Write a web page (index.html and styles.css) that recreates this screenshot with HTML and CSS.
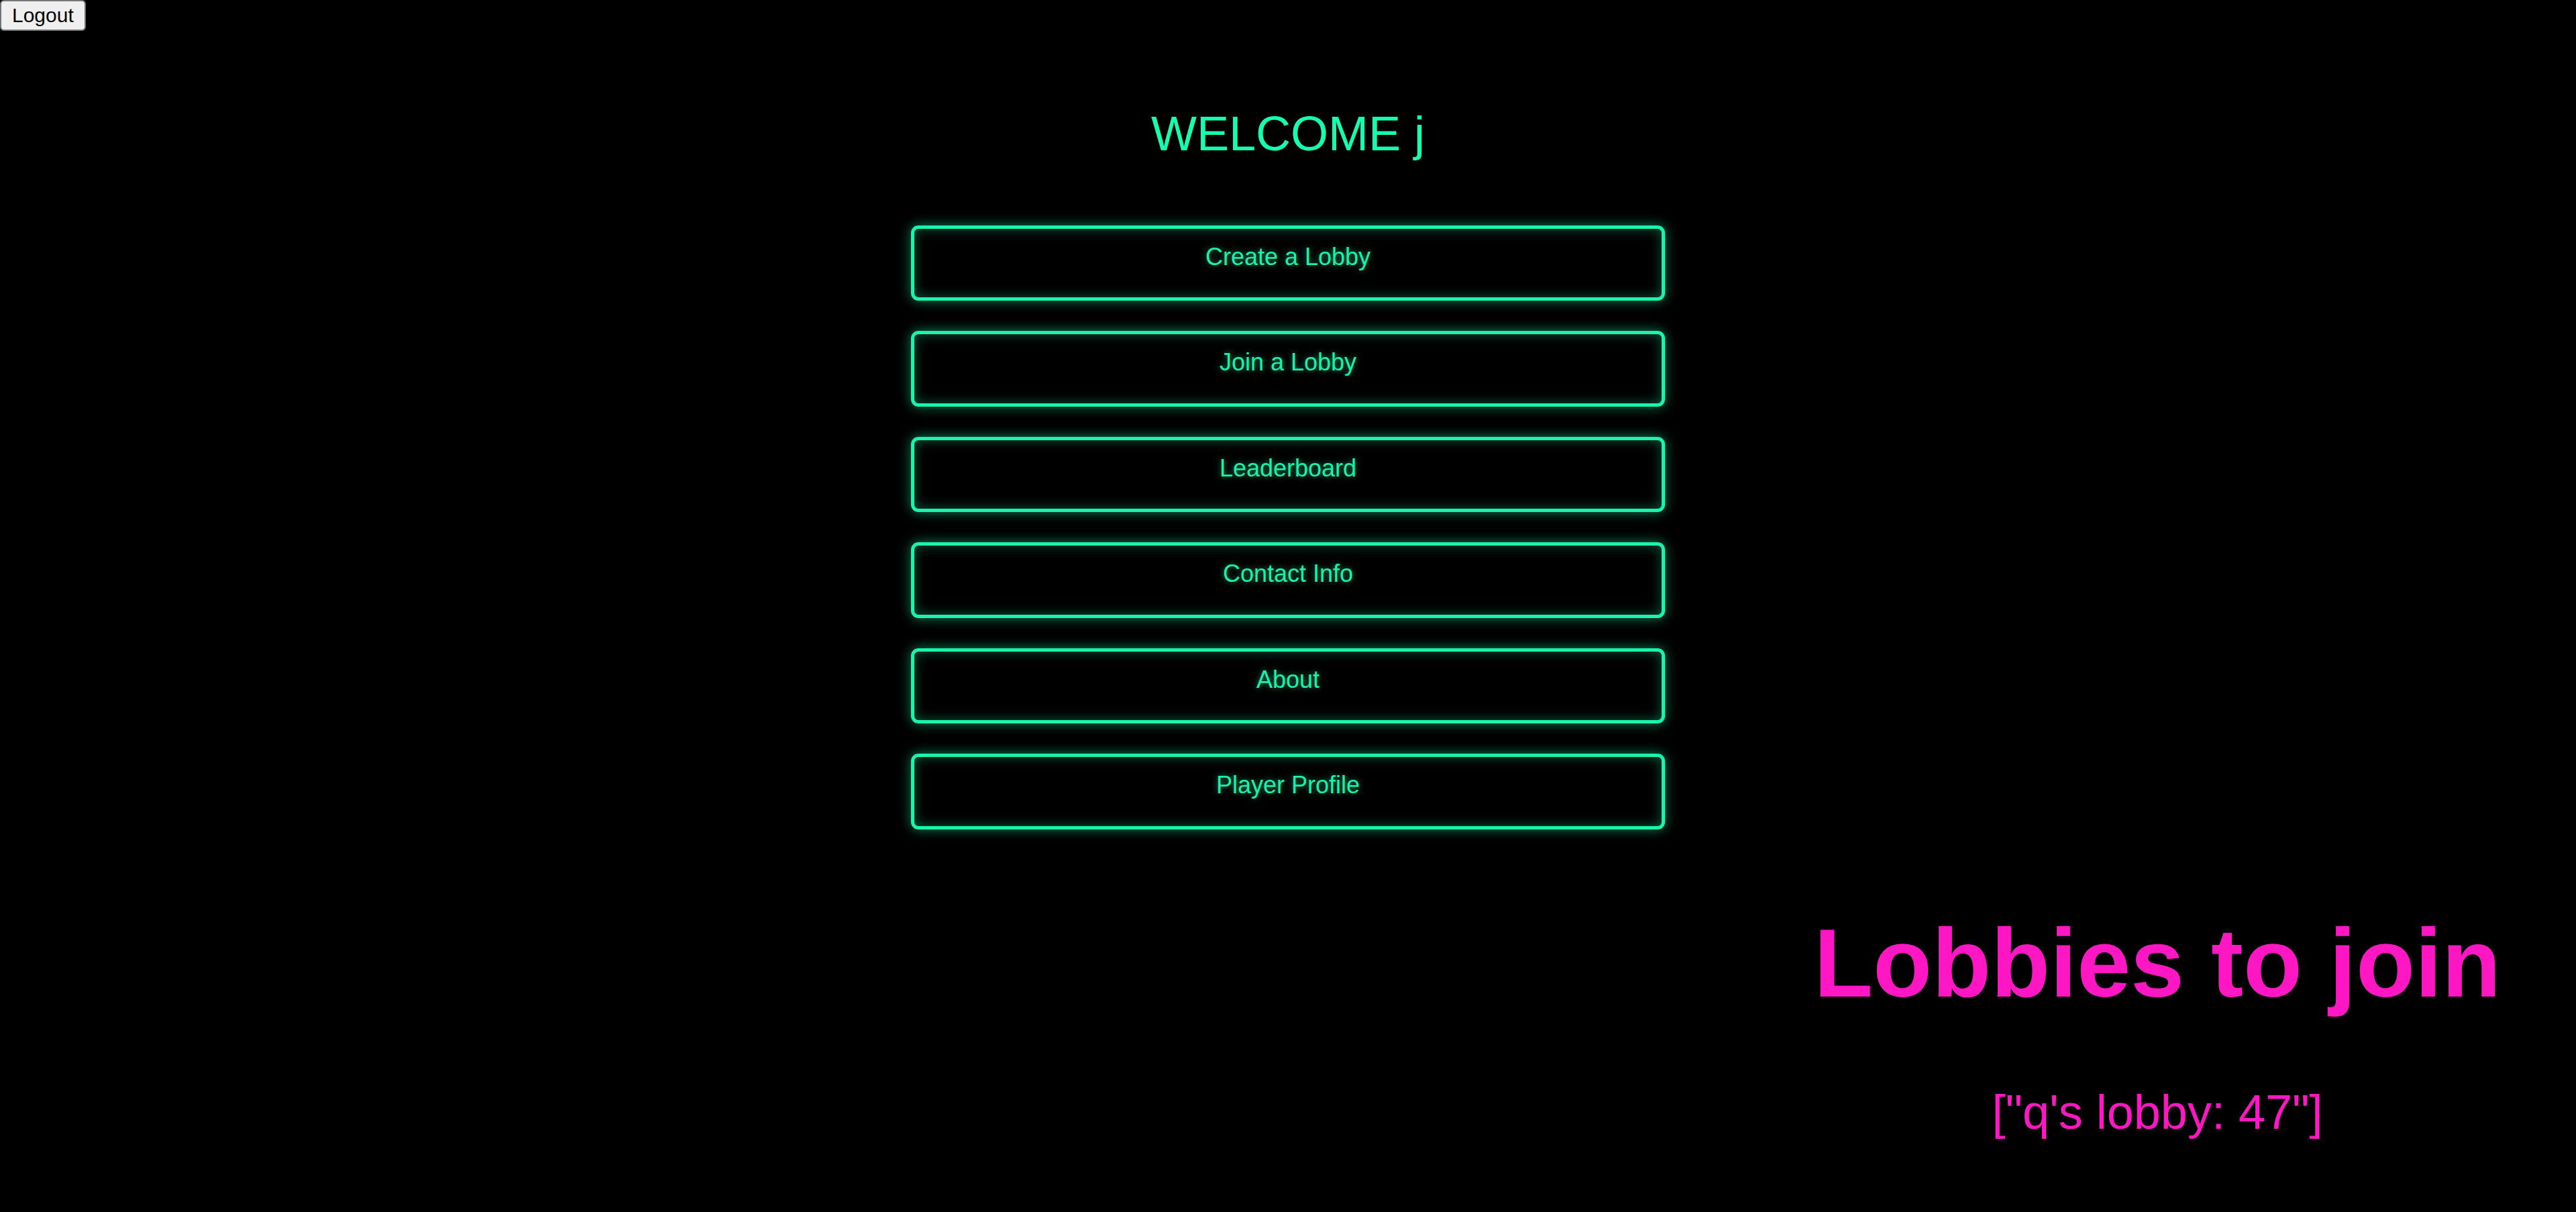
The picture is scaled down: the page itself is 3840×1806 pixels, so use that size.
FILE: index.html
```html
<!DOCTYPE html>
<html lang="en">
<head>
<meta charset="utf-8">
<title>Menu</title>
<link rel="stylesheet" href="styles.css">
</head>
<body>
  <header class="topbar">
    <button class="logout" type="button">Logout</button>
  </header>
  <h1 class="welcome">WELCOME j</h1>
  <nav class="menu">
    <a class="menu-btn" href="#">Create a Lobby</a>
    <a class="menu-btn" href="#">Join a Lobby</a>
    <a class="menu-btn" href="#">Leaderboard</a>
    <a class="menu-btn" href="#">Contact Info</a>
    <a class="menu-btn" href="#">About</a>
    <a class="menu-btn" href="#">Player Profile</a>
  </nav>
  <section class="lobbies">
    <h1 class="lobbies-title">Lobbies to join</h1>
    <p class="lobbies-list">["q's lobby: 47"]</p>
  </section>
</body>
</html>
```
FILE: styles.css
```css
html, body {
  margin: 0;
  padding: 0;
  background: #000;
}

body {
  font-family: "Liberation Sans", Arial, sans-serif;
  color: #15ffb3;
  min-height: 1806px;
}

.topbar {
  display: flex;
}

.logout {
  font-family: "Liberation Sans", Arial, sans-serif;
  font-size: 30px;
  line-height: 34.5px;
  color: #000;
  background: #efefef;
  border: 2px solid #767676;
  border-radius: 6px;
  padding: 3.5px 16px;
  margin: 0;
  cursor: pointer;
}

.welcome {
  margin: 112px 0 0;
  font-size: 72px;
  line-height: 83px;
  font-weight: normal;
  text-align: center;
  color: #15ffb3;
}

.menu {
  margin-top: 95px;
  display: flex;
  flex-direction: column;
  align-items: center;
  gap: 45px;
}

.menu-btn {
  box-sizing: border-box;
  display: block;
  width: 1124px;
  height: 112.5px;
  padding-top: 21px;
  border: 5px solid #19f5ad;
  border-radius: 11px;
  font-size: 36px;
  line-height: 41px;
  text-align: center;
  text-decoration: none;
  color: #1af2ab;
  text-shadow: 0 0 10px rgba(21, 255, 179, 0.55);
  box-shadow: 0 0 18px rgba(21, 255, 179, 0.5), inset 0 0 18px rgba(21, 255, 179, 0.35);
}

.lobbies {
  width: 1248px;
  margin: 117px 0 0 auto;
  text-align: center;
  color: #ff17c4;
}

.lobbies-title {
  margin: 0;
  font-size: 144px;
  line-height: 165.6px;
  font-weight: bold;
}

.lobbies-list {
  margin: 98px 0 0;
  font-size: 72px;
  line-height: 83px;
}
```
